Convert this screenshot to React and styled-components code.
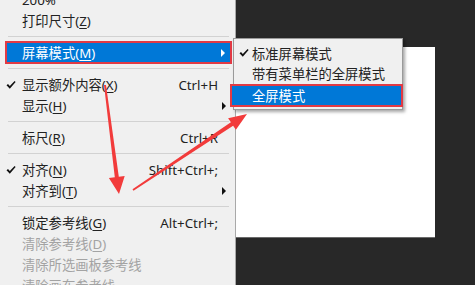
import React from 'react';
import styled, { createGlobalStyle } from 'styled-components';

const GlobalStyle = createGlobalStyle`
  html, body { margin: 0; padding: 0; }
  body { background: #282828; }
`;

const Screen = styled.div`
  position: relative;
  width: 475px;
  height: 285px;
  overflow: hidden;
  background: #282828;
  display: grid;
  grid-template-columns: 236px 1fr;
  font-family: "Noto Sans", "Noto Sans CJK SC", sans-serif;
  font-size: 13.3px;
`;

const Menu = styled.div`
  box-sizing: border-box;
  height: 285px;
  background: #f0f0f0;
  border-right: 1px solid #a9a9a9;
  overflow: hidden;
`;

const MenuList = styled.div`
  margin-top: -11px;
  display: flex;
  flex-direction: column;
`;

const Item = styled.div`
  position: relative;
  box-sizing: border-box;
  height: 21px;
  display: flex;
  align-items: center;
  justify-content: space-between;
  padding: 0 17px 0 22px;
  color: ${p => (p.$disabled ? '#a3a3a3' : '#222')};
  white-space: nowrap;
`;

const ActiveItem = styled(Item)`
  height: 23px;
  margin: -1px 3px -1px 5px;
  padding-left: 15px;
  background: #0078d7;
  border: 2px solid #e23a44;
  color: #fff;
`;

const Separator = styled.div`
  height: 11px;
  display: flex;
  align-items: center;
  padding: 0 6px 0 8px;
  &::after {
    content: '';
    flex: 1;
    height: 1px;
    background: #d2d2d2;
  }
`;

const Shortcut = styled.span`
  color: inherit;
`;

const Mn = styled.span`
  text-decoration: underline;
  text-underline-offset: 2px;
`;

const CheckBox = styled.span`
  position: absolute;
  left: ${p => p.$left}px;
  top: 50%;
  transform: translateY(-50%);
  display: flex;
`;

const Arrow = styled.span`
  position: absolute;
  right: ${p => p.$right}px;
  top: 50%;
  transform: translateY(-50%);
  width: 0;
  height: 0;
  border-top: 4px solid transparent;
  border-bottom: 4px solid transparent;
  border-left: 4px solid ${p => (p.$light ? '#fff' : '#111')};
`;

const Right = styled.div`
  display: flex;
  flex-direction: column;
  padding-top: 47px;
`;

const Canvas = styled.div`
  width: 199px;
  height: 190px;
  background: #fff;
  box-shadow: 0 1px 0 #6a6a6a;
`;

const SubMenu = styled.div`
  position: absolute;
  left: 233px;
  top: 38px;
  width: 170px;
  box-sizing: border-box;
  background: #f0f0f0;
  border: 1px solid #9a9a9a;
  box-shadow: 2px 2px 3px rgba(0, 0, 0, 0.35);
  padding: 4px 0 2px;
  display: flex;
  flex-direction: column;
`;

const SubItem = styled.div`
  position: relative;
  height: 20px;
  display: flex;
  align-items: center;
  padding-left: 18px;
  color: #222;
  white-space: nowrap;
`;

const SubActive = styled(SubItem)`
  box-sizing: border-box;
  height: 23px;
  margin: 1px -1px 0 -4px;
  padding-left: 20px;
  border: 2px solid #e23a44;
  background: #0078d7;
  color: #fff;
`;

const Overlay = styled.svg`
  position: absolute;
  left: 0;
  top: 0;
  pointer-events: none;
`;

const Check = ({ left }) => (
  <CheckBox $left={left}>
    <svg width="10" height="9" viewBox="0 0 10 9">
      <path d="M0.5 4.8 L2 3.6 L3.8 5.6 L8.6 0.6 L9.6 1.6 L3.8 8.2 Z" fill="#111" />
    </svg>
  </CheckBox>
);

const items = [
  { label: '200%' },
  { label: '打印尺寸', key: 'Z' },
  { sep: true },
  { label: '屏幕模式', key: 'M', active: true, sub: true },
  { sep: true },
  { label: '显示额外内容', key: 'X', check: true, shortcut: 'Ctrl+H' },
  { label: '显示', key: 'H', sub: true },
  { sep: true },
  { label: '标尺', key: 'R', shortcut: 'Ctrl+R' },
  { sep: true },
  { label: '对齐', key: 'N', check: true, shortcut: 'Shift+Ctrl+;' },
  { label: '对齐到', key: 'T', sub: true },
  { sep: true },
  { label: '锁定参考线', key: 'G', shortcut: 'Alt+Ctrl+;' },
  { label: '清除参考线', key: 'D', disabled: true },
  { label: '清除所选画板参考线', disabled: true },
  { label: '清除画布参考线', disabled: true },
];

const Label = ({ label, mn }) => (
  <span>
    {label}
    {mn && (
      <>
        (<Mn>{mn}</Mn>)
      </>
    )}
  </span>
);

export default function App() {
  return (
    <>
      <GlobalStyle />
      <Screen>
        <Menu>
          <MenuList>
            {items.map((it, i) => {
              if (it.sep) return <Separator key={i} />;
              const Row = it.active ? ActiveItem : Item;
              return (
                <Row key={i} $disabled={it.disabled}>
                  {it.check && <Check left={6} />}
                  <Label label={it.label} mn={it.key} />
                  {it.shortcut && <Shortcut>{it.shortcut}</Shortcut>}
                  {it.sub && <Arrow $right={it.active ? 5 : 9} $light={it.active} />}
                </Row>
              );
            })}
          </MenuList>
        </Menu>
        <Right>
          <Canvas />
        </Right>

        <SubMenu>
          <SubItem>
            <Check left={5} />
            标准屏幕模式
          </SubItem>
          <SubItem>带有菜单栏的全屏模式</SubItem>
          <SubActive>全屏模式</SubActive>
        </SubMenu>

        <Overlay width="475" height="285" viewBox="0 0 475 285">
          <polygon
            points="104,85.1 106,84.9 118.8,176.8 124.7,176 119,194 108.9,178 114.8,177.2"
            fill="#f23b3b"
          />
          <polygon
            points="132.5,189.2 133.5,190.8 233.1,125.7 235.9,129.8 247,114 228.1,118.2 230.9,122.3"
            fill="#f23b3b"
          />
        </Overlay>
      </Screen>
    </>
  );
}
